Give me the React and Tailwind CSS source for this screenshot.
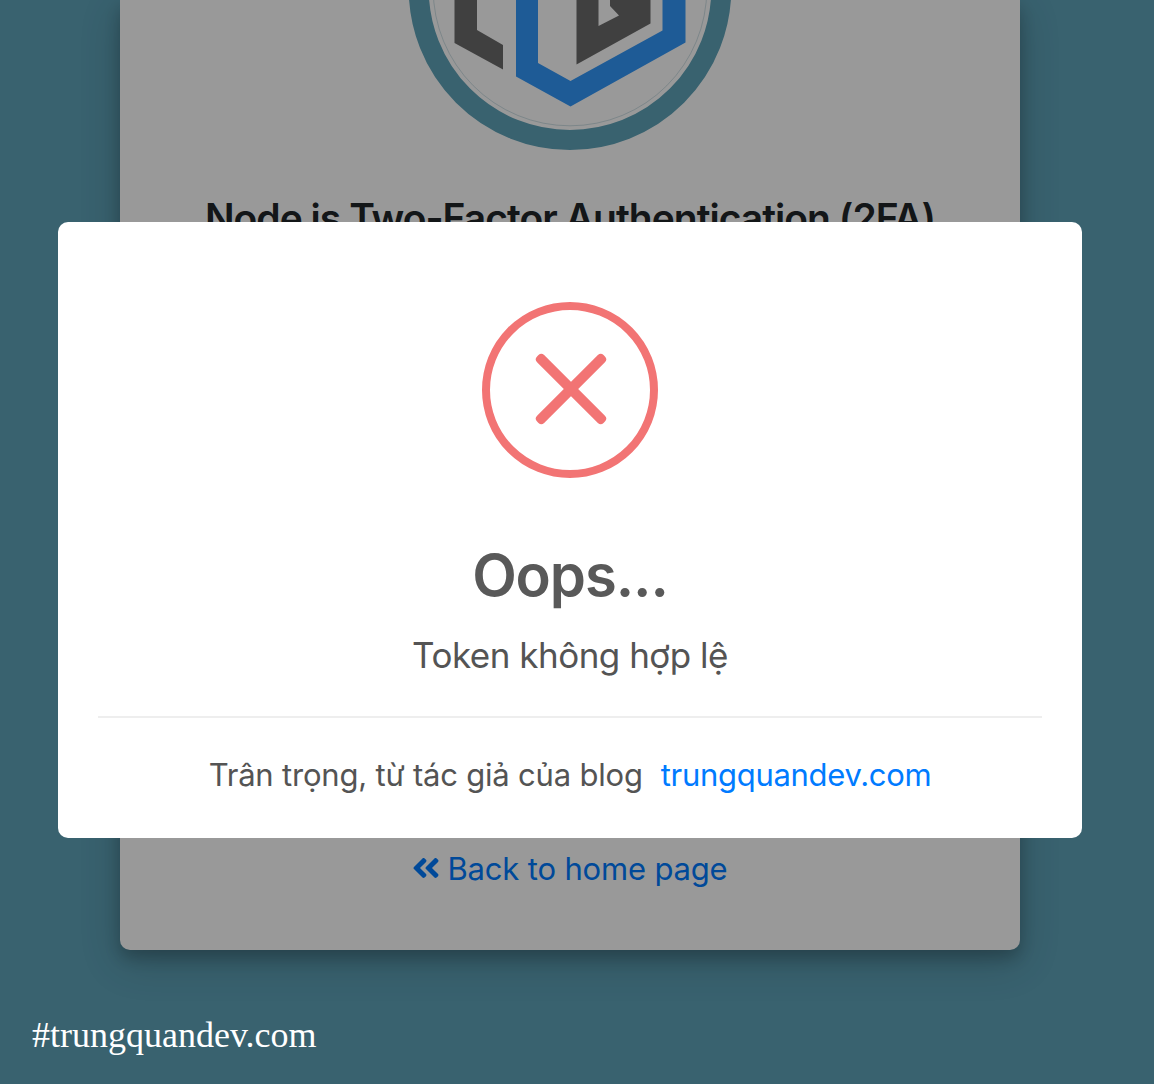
import React from "react";
import { FaAngleDoubleLeft } from "react-icons/fa";

function Logo() {
  return (
    <svg className="mx-auto block h-[151px] w-[324px]" viewBox="408 0 324 151" fill="none">
      <circle cx="570" cy="-11.3" r="151.3" stroke="#5fa3b9" strokeWidth="20" />
      <circle cx="570" cy="-11" r="136.8" stroke="#3f8196" strokeOpacity=".35" strokeWidth=".7" />
      <path d="M454.5 0H477V30L503 45V69.5L454.5 43Z" fill="#6c6c6c" />
      <path d="M516 0H538V63L570.5 81L662.5 30.5V0H685.5V42.5L570.5 106.5L516 76.5Z" fill="#3298fa" />
      <path d="M576.5 0H598.5V26L619 15.5L610 6V0H650.5V23.5L576.5 64.5Z" fill="#6c6c6c" />
    </svg>
  );
}

function ErrorIcon() {
  return (
    <svg className="mx-auto block size-44" viewBox="0 0 176 176" fill="#f27474">
      <circle cx="88" cy="88" r="84" fill="none" stroke="#f27474" strokeWidth="8" />
      <rect x="42" y="82" width="94" height="10" rx="4" transform="rotate(45 89 87)" />
      <rect x="42" y="82" width="94" height="10" rx="4" transform="rotate(-45 89 87)" />
    </svg>
  );
}

export default function App() {
  return (
    <div className="relative h-[1084px] w-[1154px] overflow-hidden bg-[#5fa3b9] font-['Inter',sans-serif]">
      <main className="ml-[120px] flex h-[950px] w-[900px] flex-col rounded-b-[10px] bg-white text-center shadow-[0_8px_16px_rgba(0,0,0,0.2),0_12px_40px_rgba(0,0,0,0.19)]">
        <Logo />
        <h1 className="mt-[43px] text-[39px] leading-[48px] font-semibold tracking-[-0.97px] whitespace-nowrap text-[#212529]">
          Node is Two-Factor Authentication (2FA)
        </h1>
        <a className="mt-auto mb-[57px] flex items-center justify-center gap-[7px] text-[31px] leading-12 tracking-[-0.17px] whitespace-nowrap text-[#007bff]">
          <FaAngleDoubleLeft className="mb-0.5 h-8 w-7 shrink-0" />
          <span>Back to home page</span>
        </a>
      </main>

      <div className="absolute inset-0 bg-black/40" />

      <section
        role="dialog"
        className="absolute top-[222px] left-[58px] flex h-[616px] w-[1024px] flex-col rounded-[10px] bg-white px-10 pt-20 text-center text-[#545454]"
      >
        <ErrorIcon />
        <h2 className="mt-[59px] text-[58px] leading-[76px] font-semibold tracking-[-1.1px] text-[#595959]">
          <span>Oops...</span>
        </h2>
        <p className="mt-[14px] text-[35px] leading-[56px] tracking-[-0.5px] whitespace-nowrap">
          <span>Token không hợp lệ</span>
        </p>
        <footer className="mt-[33px] flex justify-center gap-[18px] border-t-2 border-[#eeeeee] pt-8 text-[31px] leading-[50px] tracking-[-0.2px] whitespace-nowrap">
          <span>Trân trọng, từ tác giả của blog</span>
          <a className="tracking-[-0.3px] text-[#007bff]">trungquandev.com</a>
        </footer>
      </section>

      <p className="absolute top-[1014px] left-8 font-['Liberation_Serif',serif] text-[36px] leading-[42px] text-white">
        #trungquandev.com
      </p>
    </div>
  );
}
